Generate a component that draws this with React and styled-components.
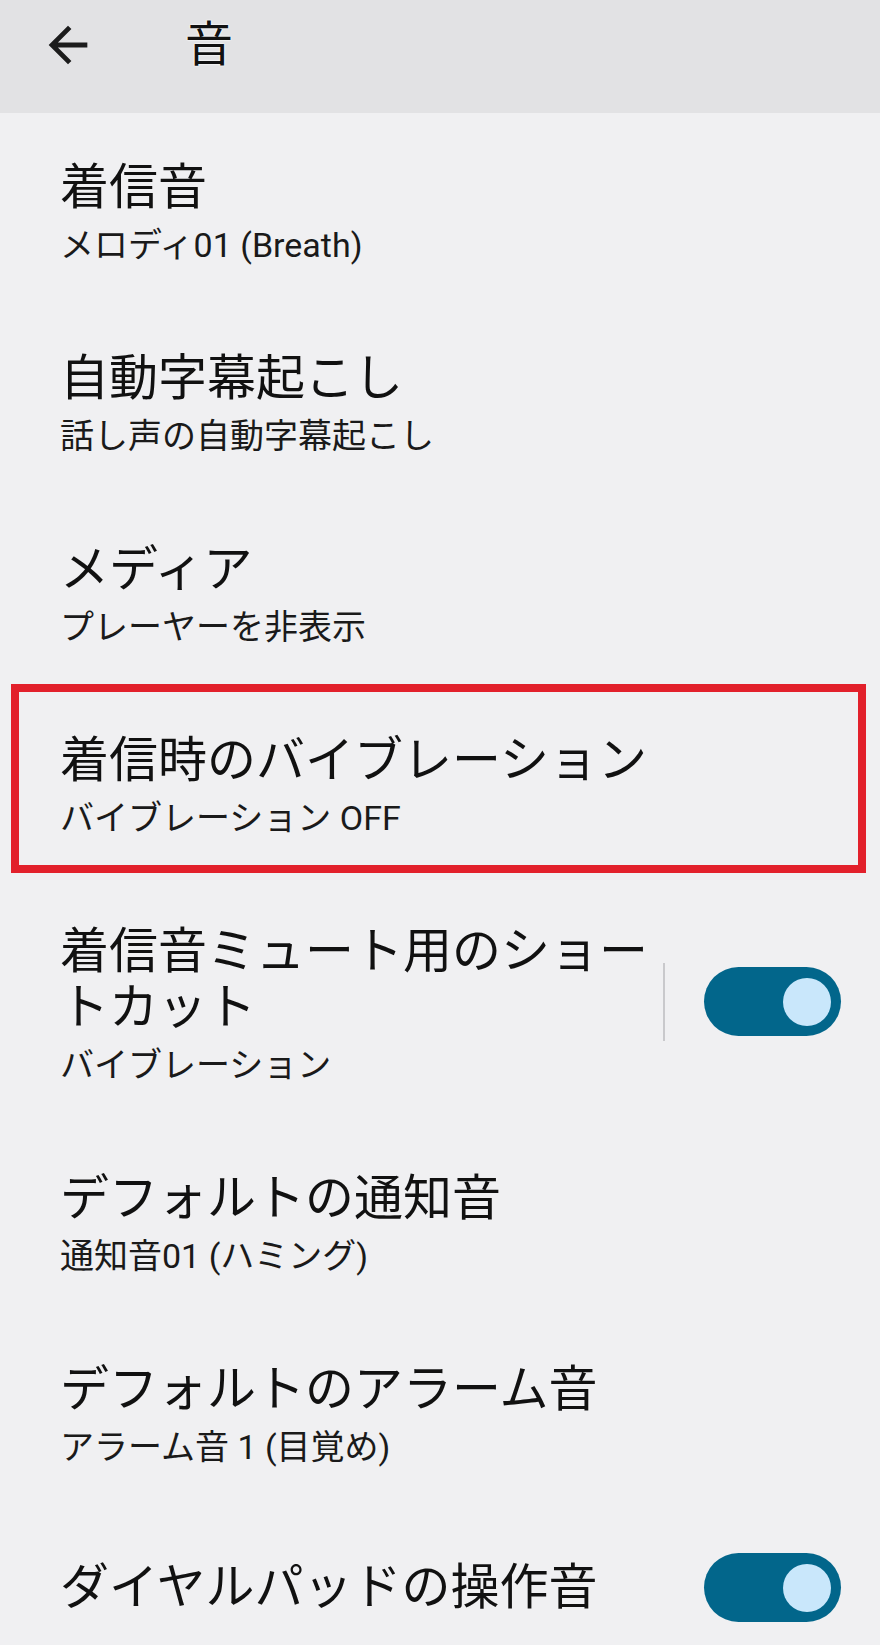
import React from 'react';
import styled, { createGlobalStyle } from 'styled-components';

const GlobalStyle = createGlobalStyle`
  html, body {
    margin: 0;
    padding: 0;
    background: #f0f0f2;
  }
  body {
    font-family: Roboto, "Noto Sans CJK JP", sans-serif;
    color: #111;
  }
  * { box-sizing: border-box; }
`;

const Screen = styled.div`
  width: 880px;
  min-height: 1645px;
  background: #f0f0f2;
  overflow: hidden;
`;

const AppBar = styled.header`
  height: 113px;
  background: #e2e2e4;
`;

const Toolbar = styled.div`
  height: 90px;
  display: flex;
  align-items: center;
`;

const BackButton = styled.button`
  width: 58px;
  height: 58px;
  margin-left: 39px;
  padding: 0;
  border: 0;
  background: transparent;
  display: flex;
  align-items: center;
  justify-content: center;
  color: #1c1c1c;
`;

const Title = styled.h1`
  margin: 0 0 0 88px;
  font-size: 48px;
  line-height: 56px;
  font-weight: 400;
  color: #111;
  text-shadow: 0 0 2px #fff, 0 0 2px #fff;
`;

const List = styled.div`
  padding-top: 5px;
  display: flex;
  flex-direction: column;
`;

const Item = styled.div`
  position: relative;
  display: flex;
  align-items: center;
  padding: 42px 39px 42px 60px;
`;

const TextBlock = styled.div`
  flex: 1;
  min-width: 0;
`;

const ItemTitle = styled.div`
  font-size: 49px;
  line-height: 56px;
  color: #111;
`;

const ItemSub = styled.div`
  margin-top: 7px;
  font-size: 34px;
  line-height: 44px;
  color: #1a1a1a;
`;

const Controls = styled.div`
  display: flex;
  align-items: center;
  flex-shrink: 0;
  margin-left: 12px;
  margin-bottom: ${(p) => (p.$lift ? '8px' : '0')};
`;

const Divider = styled.div`
  width: 2px;
  height: 78px;
  margin-right: 39px;
  background: #c9c9cc;
`;

const Switch = styled.div`
  width: 137px;
  height: 69px;
  border-radius: 35px;
  background: ${(p) => (p.$on ? '#02668b' : '#8c9196')};
  display: flex;
  align-items: center;
  justify-content: ${(p) => (p.$on ? 'flex-end' : 'flex-start')};
  padding: 0 10px;
`;

const Thumb = styled.div`
  width: 48px;
  height: 48px;
  border-radius: 50%;
  background: #c9e7fb;
`;

const Highlight = styled.div`
  position: absolute;
  top: -7px;
  left: 11px;
  right: 14px;
  bottom: 9px;
  border: 8px solid #e2202b;
  pointer-events: none;
`;

const ArrowBack = () => (
  <svg width="58" height="58" viewBox="0 0 24 24" fill="currentColor" aria-hidden="true">
    <path d="M20 11H7.83l5.59-5.59L12 4l-8 8 8 8 1.41-1.41L7.83 13H20v-2z" />
  </svg>
);

const items = [
  { title: '着信音', sub: 'メロディ01 (Breath)' },
  { title: '自動字幕起こし', sub: '話し声の自動字幕起こし' },
  { title: 'メディア', sub: 'プレーヤーを非表示' },
  { title: '着信時のバイブレーション', sub: 'バイブレーション OFF', highlight: true },
  { title: '着信音ミュート用のショートカット', sub: 'バイブレーション', toggle: true, divider: true },
  { title: 'デフォルトの通知音', sub: '通知音01 (ハミング)' },
  { title: 'デフォルトのアラーム音', sub: 'アラーム音 1 (目覚め)' },
  { title: 'ダイヤルパッドの操作音', toggle: true },
];

export default function App() {
  return (
    <>
      <GlobalStyle />
      <Screen>
        <AppBar>
          <Toolbar>
            <BackButton aria-label="戻る">
              <ArrowBack />
            </BackButton>
            <Title>音</Title>
          </Toolbar>
        </AppBar>
        <List>
          {items.map((it) => (
            <Item key={it.title}>
              <TextBlock>
                <ItemTitle>{it.title}</ItemTitle>
                {it.sub && <ItemSub>{it.sub}</ItemSub>}
              </TextBlock>
              {it.toggle && (
                <Controls $lift={it.divider}>
                  {it.divider && <Divider />}
                  <Switch $on>
                    <Thumb />
                  </Switch>
                </Controls>
              )}
              {it.highlight && <Highlight />}
            </Item>
          ))}
        </List>
      </Screen>
    </>
  );
}
